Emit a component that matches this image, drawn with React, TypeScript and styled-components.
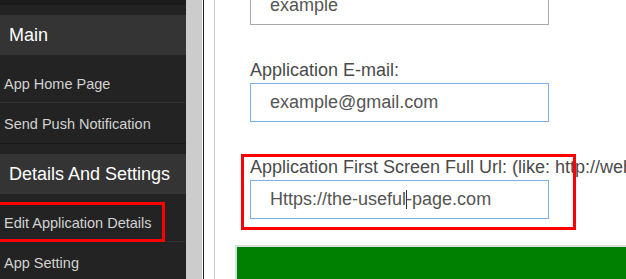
import React from 'react';
import styled, { createGlobalStyle } from 'styled-components';

const GlobalStyle = createGlobalStyle`
  html, body {
    margin: 0;
    padding: 0;
    height: 279px;
    overflow: hidden;
    background: #ffffff;
    font-family: "Liberation Sans", Arial, sans-serif;
  }
`;

const Page = styled.div`
  display: flex;
  height: 279px;
  overflow: hidden;
`;

const Sidebar = styled.nav`
  width: 186px;
  flex-shrink: 0;
  background-color: #232323;
  overflow: hidden;
`;

const SidebarTop = styled.div`
  height: 5px;
  background-color: #1b1b1b;
`;

const Section = styled.div`
  padding-top: 10px;
  border-bottom: 1px solid #1a1a1a;
`;

const SectionHeader = styled.div`
  height: 40px;
  display: flex;
  align-items: center;
  padding-left: 9px;
  background-color: #343434;
  color: #ffffff;
  font-size: 18px;
`;

const MenuList = styled.ul`
  list-style: none;
  margin: 0;
  padding: 8px 0 0;
`;

const MenuItem = styled.li<{ $last?: boolean }>`
  position: relative;
  height: 40px;
  box-sizing: border-box;
  display: flex;
  align-items: center;
  padding: 3px 0 0 4px;
  color: #d2d2d2;
  font-size: 14.5px;
  white-space: nowrap;
  border-bottom: 1px solid ${(p) => (p.$last ? 'transparent' : '#303030')};
`;

const MenuHighlight = styled.span`
  position: absolute;
  left: -6px;
  top: 0;
  width: 171px;
  height: 40px;
  border: 3px solid #ff0000;
  box-sizing: border-box;
  pointer-events: none;
`;

const ScrollTrack = styled.div`
  width: 16px;
  flex-shrink: 0;
  background-color: #cccccc;
  border-right: 1px solid #ffffff;
`;

const Main = styled.main`
  flex: 1;
  display: flex;
  border-left: 1px solid #222222;
  padding-left: 10px;
  min-width: 0;
`;

const Content = styled.div`
  flex: 1;
  border-left: 1px solid #cccccc;
  padding-left: 20px;
  min-width: 0;
`;

const Form = styled.div`
  margin-top: -14px;
  padding-left: 15px;
`;

const Field = styled.div`
  position: relative;
  margin-bottom: 35px;
`;

const Label = styled.div`
  height: 20px;
  line-height: 20px;
  margin-bottom: 3px;
  color: #4a4a4a;
  font-size: 18px;
  white-space: nowrap;
`;

const InputBox = styled.div<{ $focused?: boolean }>`
  width: 299px;
  height: 39px;
  box-sizing: border-box;
  display: flex;
  align-items: center;
  padding-left: 19px;
  border: 1px solid ${(p) => (p.$focused ? '#7eaee6' : '#aaaaaa')};
  color: #555555;
  font-size: 18px;
  white-space: nowrap;
  background: #ffffff;
`;

const Caret = styled.span`
  display: inline-block;
  width: 1px;
  height: 19px;
  margin-right: -1px;
  background-color: #333333;
`;

const FieldHighlight = styled.span`
  position: absolute;
  left: -9px;
  top: -3px;
  width: 335px;
  height: 76px;
  border: 3px solid #ff0000;
  box-sizing: border-box;
  pointer-events: none;
`;

const SavePanel = styled.div`
  margin-top: -9px;
  width: 600px;
  height: 80px;
  background-color: #008000;
  border: 2px solid #dddddd;
`;

const sections = [
  {
    title: 'Main',
    items: ['App Home Page', 'Send Push Notification'],
  },
  {
    title: 'Details And Settings',
    items: ['Edit Application Details', 'App Setting'],
    active: 'Edit Application Details',
  },
];

function App() {
  return (
    <>
      <GlobalStyle />
      <Page>
        <Sidebar>
          <SidebarTop />
          {sections.map((section) => (
            <Section key={section.title}>
              <SectionHeader>{section.title}</SectionHeader>
              <MenuList>
                {section.items.map((item, i) => (
                  <MenuItem key={item} $last={i === section.items.length - 1}>
                    {item}
                    {section.active === item && <MenuHighlight />}
                  </MenuItem>
                ))}
              </MenuList>
            </Section>
          ))}
        </Sidebar>
        <ScrollTrack />
        <Main>
          <Content>
            <Form>
              <Field>
                <InputBox>example</InputBox>
              </Field>
              <Field>
                <Label>Application E-mail:</Label>
                <InputBox $focused>example@gmail.com</InputBox>
              </Field>
              <Field>
                <Label>Application First Screen Full Url: (like: http://website.com)</Label>
                <InputBox $focused>
                  Https://the-useful
                  <Caret />
                  -page.com
                </InputBox>
                <FieldHighlight />
              </Field>
            </Form>
            <SavePanel />
          </Content>
        </Main>
      </Page>
    </>
  );
}

export default App;
